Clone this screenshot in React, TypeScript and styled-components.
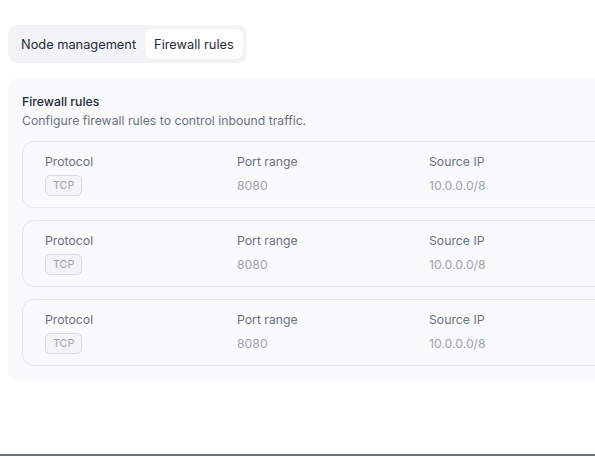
import React from "react";
import styled, { createGlobalStyle } from "styled-components";

const GlobalStyle = createGlobalStyle`
  html, body {
    margin: 0;
    padding: 0;
    background: #ffffff;
    overflow: hidden;
  }
  body {
    font-family: Inter, "Liberation Sans", sans-serif;
    color: #111827;
    -webkit-font-smoothing: antialiased;
  }
  * {
    box-sizing: border-box;
  }
`;

const Page = styled.div`
  display: flex;
  flex-direction: column;
  height: 100vh;
  padding: 25px 0 0 8px;
`;

const TabList = styled.div`
  display: inline-flex;
  align-self: flex-start;
  padding: 4px;
  background: #f3f4f6;
  border-radius: 9px;
`;

const Tab = styled.button<{ $active?: boolean }>`
  height: 30px;
  padding: 0 9px;
  border: none;
  border-radius: 7px;
  font-family: inherit;
  font-size: 12.8px;
  color: #1f2937;
  background: ${(p) => (p.$active ? "#ffffff" : "transparent")};
  box-shadow: ${(p) => (p.$active ? "0 1px 2px rgba(17, 24, 39, 0.04)" : "none")};
  cursor: pointer;
`;

const Panel = styled.section`
  width: 840px;
  margin-top: 14px;
  padding: 15px 14px 16px;
  background: #f9fafb;
  border-radius: 12px;
`;

const Title = styled.h3`
  margin: 0;
  font-size: 12.25px;
  font-weight: 500;
  line-height: 19px;
  color: #1f2937;
`;

const Description = styled.p`
  margin: 0 0 11px;
  font-size: 12.25px;
  line-height: 19px;
  color: #6b7280;
`;

const RuleList = styled.div`
  display: flex;
  flex-direction: column;
  gap: 12px;
`;

const RuleCard = styled.div`
  display: grid;
  grid-template-columns: repeat(4, 192px);
  padding: 10px 22px 11px;
  border: 1px solid #e5e7eb;
  border-radius: 12px;
  background: #f9fafb;
`;

const Field = styled.div`
  display: flex;
  flex-direction: column;
  align-items: flex-start;
  gap: 4px;
`;

const Label = styled.span`
  font-size: 12.25px;
  line-height: 19px;
  color: #6b7280;
`;

const Value = styled.span`
  font-size: 12.25px;
  line-height: 21px;
  color: #9ca3af;
`;

const Badge = styled.span`
  display: inline-flex;
  align-items: center;
  height: 21px;
  padding: 0 7px;
  border: 1px solid #d9dce1;
  border-radius: 5px;
  background: #f3f4f6;
  font-size: 10.75px;
  color: #9ca3af;
`;

const BottomRule = styled.div`
  margin-top: auto;
  margin-left: -8px;
  margin-bottom: 1px;
  height: 2px;
  background: #6b7280;
`;

type Rule = { protocol: string; ports: string; source: string };

const rules: Rule[] = [
  { protocol: "TCP", ports: "8080", source: "10.0.0.0/8" },
  { protocol: "TCP", ports: "8080", source: "10.0.0.0/8" },
  { protocol: "TCP", ports: "8080", source: "10.0.0.0/8" },
];

const App: React.FC = () => {
  return (
    <>
      <GlobalStyle />
      <Page>
        <TabList>
          <Tab>Node management</Tab>
          <Tab $active>Firewall rules</Tab>
        </TabList>
        <Panel>
          <Title>Firewall rules</Title>
          <Description>Configure firewall rules to control inbound traffic.</Description>
          <RuleList>
            {rules.map((r, i) => (
              <RuleCard key={i}>
                <Field>
                  <Label>Protocol</Label>
                  <Badge>{r.protocol}</Badge>
                </Field>
                <Field>
                  <Label>Port range</Label>
                  <Value>{r.ports}</Value>
                </Field>
                <Field>
                  <Label>Source IP</Label>
                  <Value>{r.source}</Value>
                </Field>
              </RuleCard>
            ))}
          </RuleList>
        </Panel>
        <BottomRule />
      </Page>
    </>
  );
};

export default App;
